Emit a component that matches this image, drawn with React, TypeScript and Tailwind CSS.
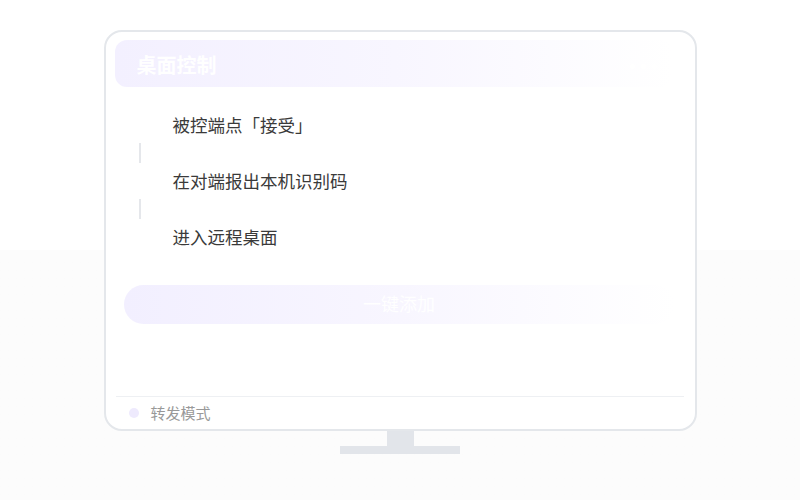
import React from "react";

const steps = ["被控端点「接受」", "在对端报出本机识别码", "进入远程桌面"];

export default function App() {
  return (
    <div
      className="w-[800px] h-[500px] bg-linear-to-b from-white from-50% to-[#fcfcfc] to-50% flex flex-col items-center pt-[30px]"
      style={{ fontFamily: '"Noto Sans", "Noto Sans CJK SC", sans-serif' }}
    >
      {/* monitor */}
      <div className="w-[593px] h-[401px] rounded-[18px] border-2 border-[#e4e7eb] bg-white flex flex-col pt-[8px] pl-[9px] pr-[10px]">
        {/* header */}
        <div className="h-[47px] w-[558px] rounded-[12px] bg-linear-to-r from-[#f3f0ff] via-[#f8f6ff] to-white flex items-center justify-between pl-[22px] pr-[16px] pt-[5px]">
          <span className="text-[20px] font-bold text-white leading-none">桌面控制</span>
          <div className="flex gap-[6px]">
            <span className="w-[5px] h-[5px] rounded-full bg-white" />
            <span className="w-[5px] h-[5px] rounded-full bg-white" />
            <span className="w-[5px] h-[5px] rounded-full bg-white" />
          </div>
        </div>

        {/* steps */}
        <div className="flex flex-col mt-[24px] pl-[58px]">
          {steps.map((s, i) => (
            <div key={s} className="flex flex-col">
              <div className="h-[28px] flex items-center text-[17.5px] text-[#3a3a3a]">{s}</div>
              {i < steps.length - 1 && (
                <div className="h-[28px] flex items-center -ml-[34px]">
                  <div className="w-[2px] h-[20px] bg-[#e5e7eb]" />
                </div>
              )}
            </div>
          ))}
        </div>

        {/* button */}
        <div className="mt-[34px] ml-[9px] w-[551px] h-[39px] rounded-full bg-linear-to-r from-[#f2efff] via-[#f8f6ff] to-white flex items-center justify-center text-[18px] text-white">
          一键添加
        </div>

        <div className="flex-1" />

        {/* footer */}
        <div className="border-t border-[#eef0f3] ml-[1px] mr-[1px] h-[33px] flex items-center pl-[13px] gap-[12px]">
          <span className="w-[10px] h-[10px] rounded-full bg-[#eeeafd]" />
          <span className="text-[15px] text-[#999999]">转发模式</span>
        </div>
      </div>

      {/* stand */}
      <div className="w-[27px] h-[15px] bg-[#e2e5ea]" />
      <div className="w-[120px] h-[8px] bg-[#e2e5ea]" />
    </div>
  );
}
